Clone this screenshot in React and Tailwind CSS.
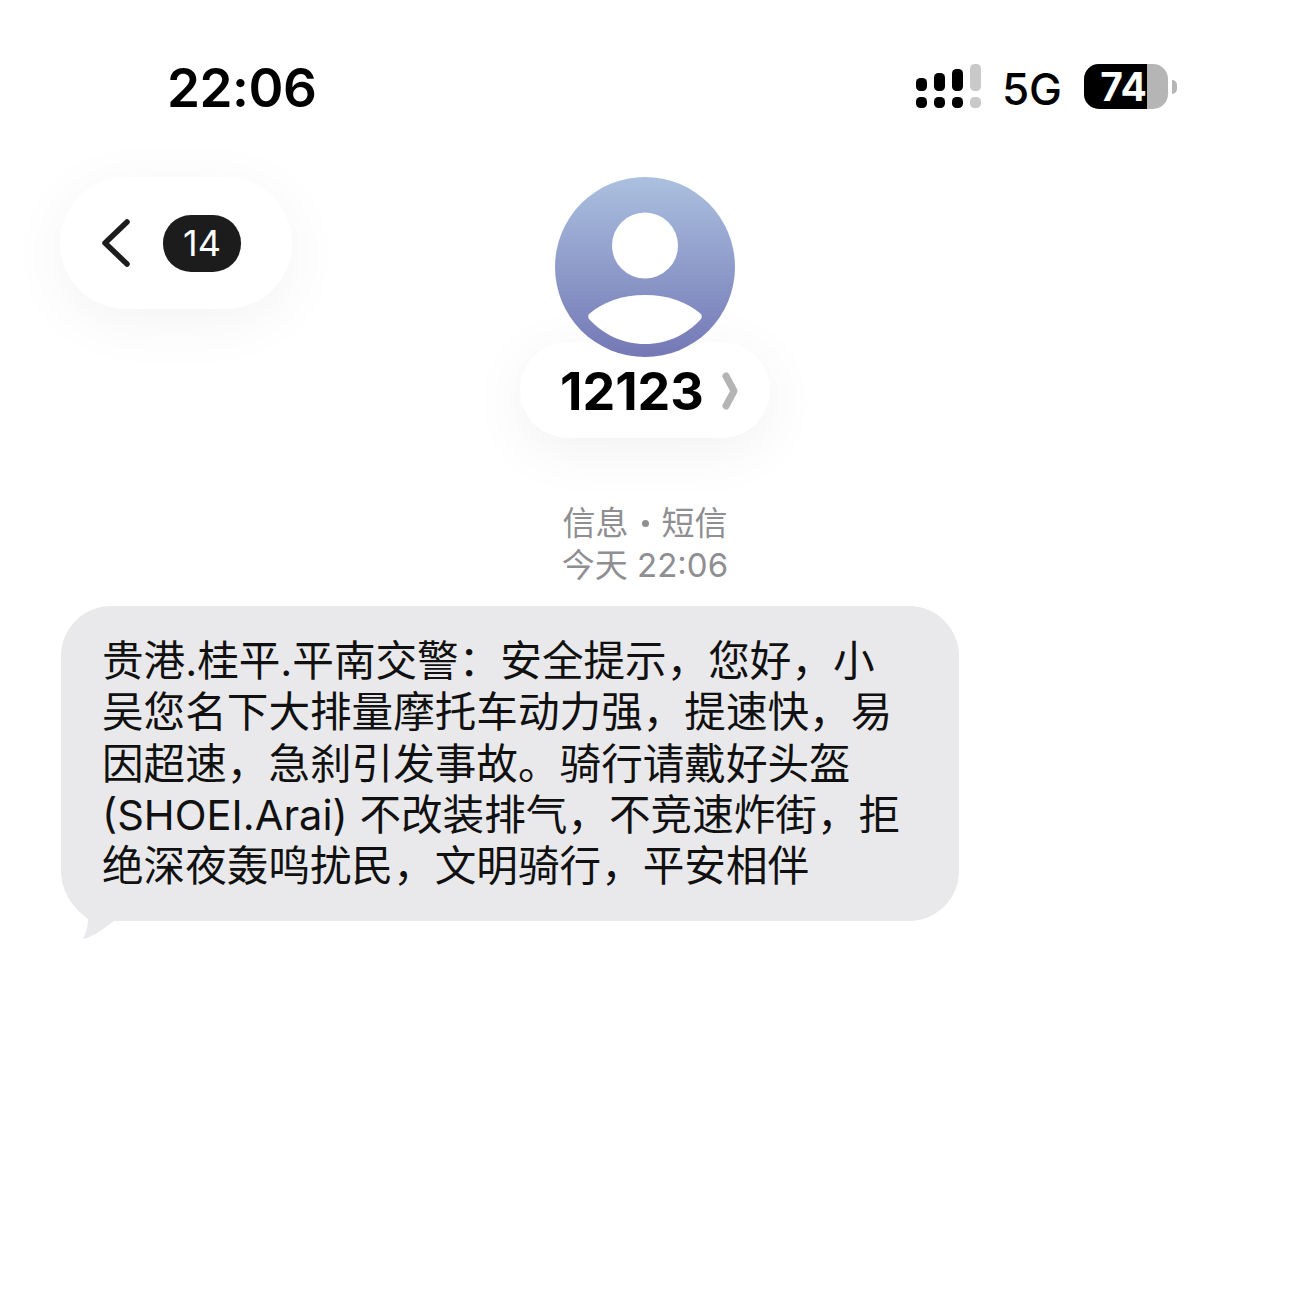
import React from 'react';

const messageLines = [
  '贵港.桂平.平南交警：安全提示，您好，小',
  '吴您名下大排量摩托车动力强，提速快，易',
  '因超速，急刹引发事故。骑行请戴好头盔',
  '(SHOEI.Arai) 不改装排气，不竞速炸街，拒',
  '绝深夜轰鸣扰民，文明骑行，平安相伴',
];

// Signal bars with the dual-SIM dots underneath
const SignalIcon = () => (
  <svg width="66" height="45" viewBox="0 0 66 45">
    <rect x="0" y="14" width="11" height="13" rx="4.5" fill="#000" />
    <rect x="18" y="9" width="11" height="18" rx="4.5" fill="#000" />
    <rect x="36" y="5" width="11" height="22" rx="4.5" fill="#000" />
    <rect x="54" y="0" width="11" height="27" rx="4.5" fill="#c9c9c9" />
    <rect x="0" y="33" width="11" height="11" rx="4.5" fill="#000" />
    <rect x="18" y="33" width="11" height="11" rx="4.5" fill="#000" />
    <rect x="36" y="33" width="11" height="11" rx="4.5" fill="#000" />
    <rect x="54" y="33" width="11" height="11" rx="4.5" fill="#c9c9c9" />
  </svg>
);

const Battery = () => (
  <div className="flex items-center gap-[4px]">
    <div className="flex h-[45px] w-[84px] rounded-[15px] bg-[#b5b5b5]">
      <div className="flex h-full w-[63px] items-center justify-end rounded-l-[15px] bg-black">
        <span className="text-[39px] leading-none font-bold text-white">74</span>
      </div>
    </div>
    <div className="h-[14px] w-[5px] rounded-r-full bg-[#b5b5b5]" />
  </div>
);

const App = () => {
  return (
    <div className="h-[1294px] w-[1290px] overflow-hidden bg-white font-['Inter','Noto_Sans_CJK_SC',sans-serif] text-black">
      {/* Status bar */}
      <div className="flex h-[177px] items-start justify-between pt-[58px] pr-[113px] pl-[167px]">
        <span className="text-[53px] leading-[60px] font-semibold tracking-[-0.5px]">22:06</span>
        <div className="flex items-center pt-[4px]">
          <SignalIcon />
          <span className="mt-[5px] mr-[22px] ml-[20px] text-[44px] leading-none font-medium">5G</span>
          <Battery />
        </div>
      </div>

      {/* Nav header */}
      <div className="grid grid-cols-[1fr_250px_1fr]">
        <div className="pl-[60px]">
          <div className="flex h-[132px] w-[232px] items-center rounded-[66px] bg-white pl-[40px] shadow-[0_12px_60px_rgba(0,0,0,0.05)]">
            <svg width="32" height="50" viewBox="0 0 32 50" fill="none" stroke="#1c1c1c" strokeWidth="5.5" strokeLinecap="round" strokeLinejoin="round">
              <path d="M27 4 L5 25 L27 46" />
            </svg>
            <div className="ml-[31px] flex h-[57px] w-[78px] items-center justify-center rounded-[28px] bg-[#1c1c1c] text-[36px] text-white">
              14
            </div>
          </div>
        </div>

        <div className="flex flex-col items-center">
          <div className="relative z-10 h-[180px] w-[180px] overflow-hidden rounded-full bg-gradient-to-b from-[#abc0df] to-[#7478b5]">
            <svg width="180" height="180" viewBox="0 0 180 180" fill="#fff">
              <circle cx="90" cy="68.5" r="33" />
              <path d="M34 137 C48 125 67 118 90 118 C113 118 132 125 146 137 C147 139 147 140 146 142 C132 157 113 167 90 167 C67 167 48 157 34 142 C33 140 33 139 34 137 Z" />
            </svg>
          </div>
          <div className="mt-[-15px] flex h-[96px] w-[250px] items-center rounded-[48px] bg-white pl-[40px] shadow-[0_12px_60px_rgba(0,0,0,0.06)]">
            <span className="mt-[4px] text-[52px] leading-none font-bold">12123</span>
            <svg className="mt-[2px] ml-[18px]" width="16" height="38" viewBox="0 0 16 38" fill="none" stroke="#b4b4b4" strokeWidth="7" strokeLinecap="round" strokeLinejoin="round">
              <path d="M4 4 L12 19 L4 34" />
            </svg>
          </div>
        </div>
        <div />
      </div>

      {/* Conversation meta */}
      <div className="mt-[64px] flex flex-col items-center text-[33px] leading-[42px] text-[#8e8e93]">
        <span className="flex items-center">
          信息
          <span className="mx-[13px] h-[7px] w-[7px] rounded-full bg-[#8e8e93]" />
          短信
        </span>
        <span>今天 22:06</span>
      </div>

      {/* Message bubble */}
      <div className="relative mt-[20px] ml-[61px] h-[315px] w-[898px] rounded-[50px] bg-[#e9e9eb] pt-[30px] pl-[41px] text-[41.6px] leading-[51.25px] text-[#111]">
        {messageLines.map((line) => (
          <div key={line} className="whitespace-nowrap">
            {line}
          </div>
        ))}
        <svg className="absolute top-[290px] left-[0px]" width="70" height="45" viewBox="0 0 70 45" fill="#e9e9eb">
          <path d="M6 0 C12 10 19 17 27 23 C27 30 25 37 22 43 C32 41 42 33 53 25 L60 20 L30 0 Z" />
        </svg>
      </div>
    </div>
  );
};

export default App;
